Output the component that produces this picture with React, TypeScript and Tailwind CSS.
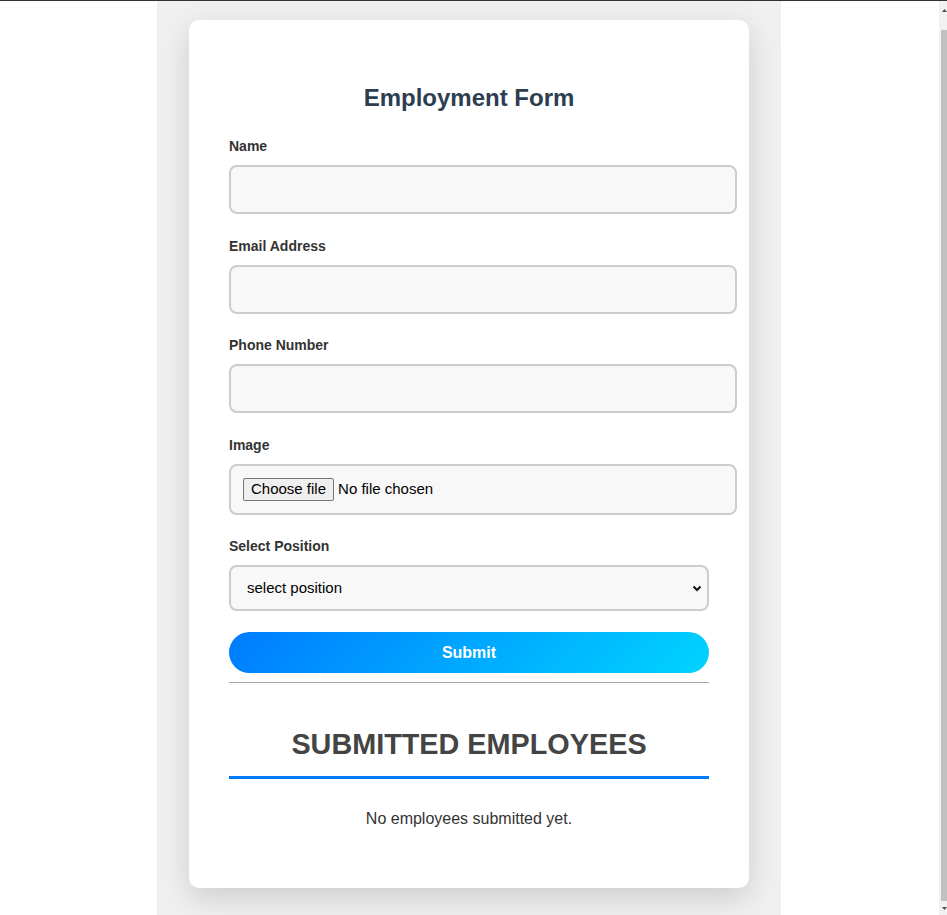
import React from "react";

const Field = ({ label, mb = "mb-[23.5px]" }: { label: string; mb?: string }) => (
  <div className={mb}>
    <label className="block text-[14px] leading-[16px] font-bold text-[#333] mb-[11px]">{label}</label>
    <input
      type="text"
      className="block w-[508px] h-[49px] border-2 border-[#ccc] rounded-[8px] bg-[#f8f8f8] px-[12px] text-[15px] outline-none"
    />
  </div>
);

export default function App() {
  return (
    <div className="flex flex-col h-[915px] overflow-hidden bg-white font-['Liberation_Sans',Arial,sans-serif]">
      <div className="h-px bg-[#333] shrink-0" />
      <div className="flex flex-1 min-h-0">
        <div className="flex-1 flex justify-center bg-white pr-px">
          <div className="w-[624px] bg-[#f0f0f0] pt-[19px] overflow-hidden">
            <div className="w-[560px] mx-auto bg-white rounded-[10px] shadow-[0_10px_30px_rgba(0,0,0,0.15)] pt-[64px] pb-[59.5px] px-[40px]">
              <h2 className="text-[24px] leading-[28px] font-bold text-center text-[#2c3e50] mb-[26px]">
                Employment Form
              </h2>
              <Field label="Name" />
              <Field label="Email Address" />
              <Field label="Phone Number" />
              <div className="mb-[23.5px]">
                <label className="block text-[14px] leading-[16px] font-bold text-[#333] mb-[11px]">Image</label>
                <div className="w-[508px] h-[51px] border-2 border-[#ccc] rounded-[8px] bg-[#f8f8f8] px-[12px] flex items-center gap-[4px] text-[15px] text-black">
                  <span className="h-[23px] px-[7px] border border-[#767676] rounded-[2px] bg-[#efefef] flex items-center">
                    Choose file
                  </span>
                  <span>No file chosen</span>
                </div>
              </div>
              <div className="mb-[21px]">
                <label className="block text-[14px] leading-[16px] font-bold text-[#333] mb-[11px]">Select Position</label>
                <div className="relative w-[480px] h-[46px]">
                  <select className="appearance-none w-full h-full border-2 border-[#ccc] rounded-[8px] bg-[#f8f8f8] pl-[16px] text-[15px] text-black outline-none">
                    <option>select position</option>
                  </select>
                  <svg
                    className="absolute right-[7px] top-[20px] pointer-events-none"
                    width="10"
                    height="7"
                    viewBox="0 0 10 7"
                  >
                    <polyline points="1.5,1.5 5,5 8.5,1.5" fill="none" stroke="#111" strokeWidth="2" />
                  </svg>
                </div>
              </div>
              <button className="block w-[480px] h-[41px] rounded-full bg-[linear-gradient(135deg,#007bff,#00d4ff)] text-white font-bold text-[16px] mb-[9px]">
                Submit
              </button>
              <div className="w-[480px] h-px bg-[#a8a8a8]" />
              <h2 className="mt-[45px] w-[480px] text-center text-[28.8px] leading-[33px] font-bold text-[#444] pb-[15px] border-b-[3px] border-[#007bff]">
                SUBMITTED EMPLOYEES
              </h2>
              <p className="mt-[31px] w-[480px] text-center text-[16px] leading-[18px] text-[#333]">
                No employees submitted yet.
              </p>
            </div>
          </div>
        </div>
        <div className="w-[8px] bg-[#f1f1f1] flex flex-col shrink-0">
          <div className="h-[29px] flex justify-end pt-[8px]">
            <svg width="5" height="4" viewBox="0 0 5 4">
              <polygon points="2.5,0 5,3 0,3" fill="#505050" />
            </svg>
          </div>
          <div className="flex-1 ml-[2px] bg-[#c1c1c1]" />
          <div className="h-[14px] flex justify-end pt-[6px]">
            <svg width="5" height="4" viewBox="0 0 5 4">
              <polygon points="0,0 5,0 2.5,3" fill="#505050" />
            </svg>
          </div>
        </div>
      </div>
    </div>
  );
}
